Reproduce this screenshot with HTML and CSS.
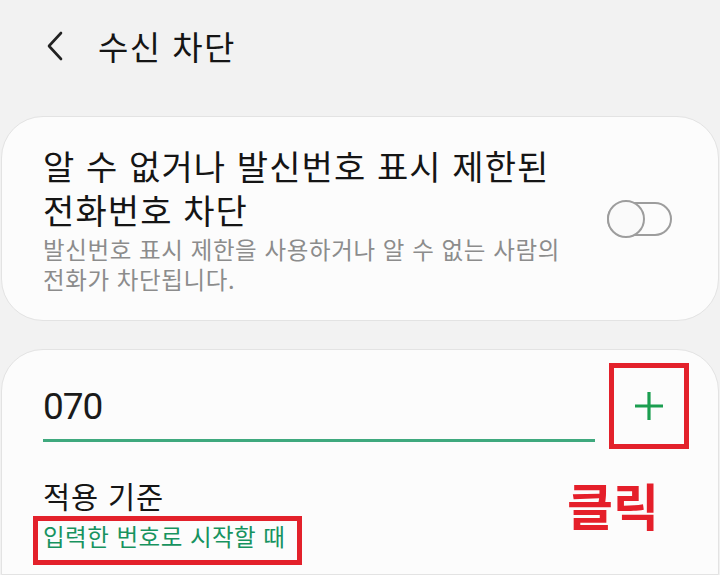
FILE: index.html
```html
<!DOCTYPE html>
<html lang="ko">

<head>
    <meta charset="UTF-8">
    <meta name="viewport" content="width=device-width, initial-scale=1.0">
    <title>수신 차단</title>
    <link rel="stylesheet" href="styles.css">
</head>

<body>
    <!-- 상단 바 -->
    <div class="header">
        <svg class="back" width="20" height="30" viewBox="0 0 20 30">
            <path d="M16 2 L4 15 L16 28" fill="none" stroke="#222" stroke-width="2.6" stroke-linecap="round" stroke-linejoin="round" />
        </svg>
        <h1 class="title">수신 차단</h1>
    </div>

    <!-- 알 수 없는 번호 차단 -->
    <div class="card card-unknown">
        <div class="text">
            <div class="main">알 수 없거나 발신번호 표시 제한된 전화번호 차단</div>
            <div class="sub">발신번호 표시 제한을 사용하거나 알 수 없는 사람의 전화가 차단됩니다.</div>
        </div>
        <div class="toggle">
            <span class="knob"></span>
        </div>
    </div>

    <!-- 번호 추가 -->
    <div class="card card-add">
        <div class="input-row">
            <div class="field">070</div>
            <div class="btn-add">
                <svg width="30" height="30" viewBox="0 0 30 30">
                    <path d="M15 1 V29 M1 15 H29" stroke="#1b9e50" stroke-width="3.2" />
                </svg>
            </div>
        </div>
        <div class="rule">적용 기준</div>
        <span class="rule-value">입력한 번호로 시작할 때</span>
        <span class="note">클릭</span>
    </div>
</body>

</html>
```

FILE: styles.css
```css
/* 리셋 */
* {
    margin: 0;
    padding: 0;
    box-sizing: border-box;
}

body {
    background-color: #f2f2f2;
    font-family: "Noto Sans CJK KR", "Noto Sans", sans-serif;
    color: #151515;
    word-break: keep-all;
    overflow: hidden;
}

/* 상단 바 */
.header {
    height: 92px;
    display: flex;
    align-items: center;
    padding-left: 45px;
}

.header .back {
    display: block;
    margin-right: 33px;
}

.title {
    font-size: 33px;
    font-weight: 400;
    line-height: 40px;
    letter-spacing: 1.4px;
}

/* 카드 */
.card {
    background-color: #fcfcfc;
    border: 1px solid #e3e3e3;
    border-radius: 42px;
    margin: 0 1px 0 1px;
}

.card-unknown {
    margin-top: 24px;
    height: 205px;
    display: flex;
    align-items: center;
    padding: 0 46px 0 41px;
}

.card-unknown .text {
    width: 562px;
}

.card-unknown .main {
    font-size: 34px;
    line-height: 44px;
    letter-spacing: 1.1px;
}

.card-unknown .sub {
    font-size: 23.5px;
    line-height: 30px;
    letter-spacing: 0.6px;
    color: #8c8c8c;
    margin-top: 2px;
}

.toggle {
    position: relative;
    width: 65px;
    height: 34px;
    margin-left: auto;
    border: 2px solid #9d9d9d;
    border-radius: 17px;
}

.toggle .knob {
    position: absolute;
    left: -2px;
    top: -4px;
    width: 38px;
    height: 38px;
    border: 2px solid #9d9d9d;
    border-radius: 50%;
    background-color: #fafafa;
}

.card-add {
    position: relative;
    margin-top: 28px;
    height: 226px;
    padding: 13px 28px 0 41px;
    border-bottom-left-radius: 0;
    border-bottom-right-radius: 0;
}

.input-row {
    display: flex;
    align-items: flex-start;
}

.field {
    width: 552px;
    height: 79px;
    padding-top: 24px;
    font-family: Roboto, "Noto Sans", sans-serif;
    font-size: 37px;
    line-height: 40px;
    letter-spacing: -1px;
    color: #1a1a1a;
    border-bottom: 3px solid #3fa97e;
}

.btn-add {
    width: 80px;
    height: 86px;
    margin-left: auto;
    margin-right: 1px;
    border: 5px solid #e3212b;
    display: flex;
    align-items: center;
    justify-content: center;
}

.btn-add svg {
    display: block;
}

.rule {
    margin-top: 28px;
    font-size: 29.5px;
    line-height: 37px;
    letter-spacing: 0.8px;
}

.rule-value {
    display: inline-block;
    margin: 2px 0 0 -10px;
    padding: 0 12px 8px 5px;
    border: 5px solid #e3212b;
    font-size: 23.5px;
    line-height: 31px;
    letter-spacing: 0.5px;
    color: #17935f;
}

/* 안내 표시 */
.note {
    position: absolute;
    left: 565px;
    top: 128px;
    font-size: 50px;
    font-weight: 700;
    line-height: 52px;
    color: #e51f2a;
}
```
